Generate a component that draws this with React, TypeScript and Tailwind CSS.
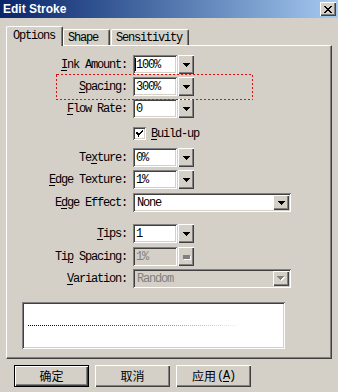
import React from "react";

const sunken =
  "shadow-[inset_1px_1px_0_#808080,inset_-1px_-1px_0_#ffffff,inset_2px_2px_0_#404040,inset_-2px_-2px_0_#d4d0c8]";
const raised =
  "shadow-[inset_1px_1px_0_#ffffff,inset_-1px_-1px_0_#404040,inset_-2px_-2px_0_#808080]";
const mono = "font-['Liberation_Mono',monospace] text-[12px] tracking-[-1.2px] leading-none";

function Arrow({ disabled }: { disabled?: boolean }) {
  if (disabled) {
    return (
      <svg width="8" height="5" viewBox="0 0 8 5" shapeRendering="crispEdges">
        <path d="M1 1h7v1h-7zM2 2h5v1h-5zM3 3h3v1h-3zM4 4h1v1h-1z" fill="#ffffff" />
        <path d="M0 0h7v1h-7zM1 1h5v1h-5zM2 2h3v1h-3zM3 3h1v1h-1z" fill="#808080" />
      </svg>
    );
  }
  return (
    <svg width="7" height="4" viewBox="0 0 7 4" shapeRendering="crispEdges">
      <path d="M0 0h7v1h-7zM1 1h5v1h-5zM2 2h3v1h-3zM3 3h1v1h-1z" fill="#000" />
    </svg>
  );
}

function U({ children }: { children: React.ReactNode }) {
  return <span className="underline underline-offset-2">{children}</span>;
}

function Label({ children }: { children: React.ReactNode }) {
  return (
    <div className={`w-[120px] text-right text-black ${mono} whitespace-pre`}>{children}</div>
  );
}

function SpinRow({
  label,
  value,
  disabled,
  caret,
  mt,
  rectBtn,
}: {
  label: React.ReactNode;
  value: string;
  disabled?: boolean;
  caret?: boolean;
  mt: string;
  rectBtn?: boolean;
}) {
  return (
    <div className={`flex items-center h-[19px] ${mt}`}>
      <Label>{label}</Label>
      <div
        className={`ml-[6px] w-[44px] h-[19px] ${sunken} ${
          disabled ? "bg-[#d4d0c8] text-[#808080]" : "bg-white text-black"
        } flex items-center pl-[3px] relative`}
      >
        {caret && <span className="absolute left-[2px] top-[3px] w-px h-[13px] bg-black" />}
        <span className={mono}>{value}</span>
      </div>
      <div className={`ml-[1px] w-[16px] h-[19px] bg-[#d4d0c8] ${raised} flex items-center justify-center`}>
        {rectBtn ? (
          <div className="w-[7px] h-[4px] bg-[#808080] shadow-[1px_1px_0_#ffffff]" />
        ) : (
          <Arrow />
        )}
      </div>
    </div>
  );
}

function ComboRow({
  label,
  value,
  disabled,
  mt,
}: {
  label: React.ReactNode;
  value: string;
  disabled?: boolean;
  mt: string;
}) {
  return (
    <div className={`flex items-center h-[19px] ${mt}`}>
      <Label>{label}</Label>
      <div
        className={`ml-[6px] w-[158px] h-[19px] ${sunken} ${
          disabled ? "bg-[#d4d0c8] text-[#808080]" : "bg-white text-black"
        } flex items-center pl-[4px] pr-[2px]`}
      >
        <span className={`${mono} flex-1`}>{value}</span>
        <div className={`w-[16px] h-[15px] bg-[#d4d0c8] ${raised} flex items-center justify-center`}>
          <Arrow disabled={disabled} />
        </div>
      </div>
    </div>
  );
}

export default function App() {
  return (
    <div className="w-[338px] h-[392px] bg-[#d4d0c8] overflow-hidden flex flex-col">
      {/* Title bar */}
      <div className="h-[18px] flex items-center bg-gradient-to-r from-[#0a246a] to-[#a6caf0] pl-[3px]">
        <span className="font-['Liberation_Sans',Arial,sans-serif] font-bold text-[12px] text-white leading-none">
          Edit Stroke
        </span>
        <div className={`ml-auto mr-[2px] w-[16px] h-[14px] bg-[#d4d0c8] ${raised} flex items-center justify-center`}>
          <svg width="8" height="7" viewBox="0 0 8 7" shapeRendering="crispEdges">
            <path d="M0 0h2v1h-2zM6 0h2v1h-2zM1 1h2v1h-2zM5 1h2v1h-2zM2 2h4v1h-4zM3 3h2v1h-2zM2 4h4v1h-4zM1 5h2v1h-2zM5 5h2v1h-2zM0 6h2v1h-2zM6 6h2v1h-2z" fill="#000" />
          </svg>
        </div>
      </div>

      {/* Tabs */}
      <div className="mt-[8px] flex items-end h-[19px] pl-[6px] relative z-10">
        <div className="h-[20px] -mb-px w-[57px] bg-[#d4d0c8] border-l border-t border-white border-r border-r-[#404040] rounded-tl-[2px] rounded-tr-[2px] shadow-[inset_-1px_0_0_#808080] flex items-center pl-[6px] pb-[2px]">
          <span className={mono}>Options</span>
        </div>
        <div className="h-[16px] w-[47px] bg-[#d4d0c8] border-l border-t border-white border-r border-r-[#404040] rounded-tl-[2px] rounded-tr-[2px] shadow-[inset_-1px_0_0_#808080] flex items-center pl-[4px]">
          <span className={mono}>Shape</span>
        </div>
        <div className="ml-[1px] h-[16px] w-[78px] bg-[#d4d0c8] border-l border-t border-white border-r border-r-[#404040] rounded-tl-[2px] rounded-tr-[2px] shadow-[inset_-1px_0_0_#808080] flex items-center pl-[4px]">
          <span className={mono}>Sensitivity</span>
        </div>
      </div>

      {/* Panel */}
      <div className="ml-[6px] w-[326px] h-[314px] border-l border-t border-white border-r border-b border-r-[#404040] border-b-[#404040] shadow-[inset_-1px_-1px_0_#808080] relative flex flex-col pt-[9px]">
        <SpinRow
          label={
            <>
              <U>I</U>nk Amount:
            </>
          }
          value="100%"
          caret
          mt="mt-0"
        />
        <SpinRow
          label={
            <>
              <U>S</U>pacing:
            </>
          }
          value="300%"
          mt="mt-[3px]"
        />
        <SpinRow
          label={
            <>
              <U>F</U>low Rate:
            </>
          }
          value="0"
          mt="mt-[3px]"
        />
        <div className="flex items-center h-[13px] mt-[9px] pl-[126px]">
          <div className={`w-[13px] h-[13px] bg-white ${sunken} flex items-center justify-center`}>
            <svg width="7" height="7" viewBox="0 0 7 7" shapeRendering="crispEdges">
              <path d="M6 0h1v1h-1zM5 1h1v1h-1zM0 2h1v1h-1zM4 2h1v1h-1zM0 3h2v1h-2zM3 3h2v1h-2zM1 4h3v1h-3zM2 5h1v1h-1z M6 1h1v1h-1zM5 2h1v1h-1zM1 2h1v1h-1zM2 3h1v1h-1zM2 6h1v1h-1z" fill="#000" />
            </svg>
          </div>
          <span className={`ml-[5px] ${mono}`}>
            <U>B</U>uild-up
          </span>
        </div>
        <SpinRow
          label={
            <>
              Te<U>x</U>ture:
            </>
          }
          value="0%"
          mt="mt-[8px]"
        />
        <SpinRow
          label={
            <>
              <U>E</U>dge Texture:
            </>
          }
          value="1%"
          mt="mt-[3px]"
        />
        <ComboRow
          label={
            <>
              E<U>d</U>ge Effect:
            </>
          }
          value="None"
          mt="mt-[4px]"
        />
        <SpinRow
          label={
            <>
              <U>T</U>ips:
            </>
          }
          value="1"
          mt="mt-[12px]"
        />
        <SpinRow
          label={
            <>
              Ti<U>p</U> Spacing:
            </>
          }
          value="1%"
          disabled
          rectBtn
          mt="mt-[4px]"
        />
        <ComboRow
          label={
            <>
              <U>V</U>ariation:
            </>
          }
          value="Random"
          disabled
          mt="mt-[3px]"
        />

        {/* Preview */}
        <div className={`ml-[15px] mt-[14px] w-[263px] h-[47px] bg-white ${sunken} flex items-center pl-[5px]`}>
          <svg width="210" height="2" viewBox="0 0 210 2" shapeRendering="crispEdges">
            <defs>
              <linearGradient id="fade" gradientUnits="userSpaceOnUse" x1="0" y1="0" x2="210" y2="0">
                <stop offset="0" stopColor="#000000" />
                <stop offset="0.35" stopColor="#333333" />
                <stop offset="0.7" stopColor="#9a9a9a" />
                <stop offset="1" stopColor="#f2f2f2" />
              </linearGradient>
              <pattern id="dots" patternUnits="userSpaceOnUse" width="2" height="1">
                <rect x="0" y="0" width="1" height="1" fill="#fff" />
              </pattern>
            </defs>
            <rect x="0" y="0" width="210" height="1" fill="url(#fade)" />
            <rect x="0" y="0" width="210" height="1" fill="url(#dots)" />
          </svg>
        </div>

        {/* Red dotted highlight */}
        <svg className="absolute left-[49px] top-[28px]" width="197" height="26" viewBox="0 0 197 26" shapeRendering="crispEdges">
          <rect x="0.5" y="0.5" width="196" height="25" fill="none" stroke="#e01010" strokeWidth="1" strokeDasharray="2 2" />
        </svg>
      </div>

      {/* Buttons */}
      <div className="mt-[6px] ml-[14px] flex gap-[6px] font-['Noto_Sans_CJK_SC',sans-serif] text-[12px] leading-none">
        <div className="w-[75px] h-[22px] border border-black">
          <div className={`w-full h-full ${raised} flex items-center justify-center`}>确定</div>
        </div>
        <div className={`w-[75px] h-[22px] ${raised} flex items-center justify-center`}>取消</div>
        <div className={`w-[75px] h-[22px] ${raised} flex items-center justify-center`}>
          应用<span className={`${mono} ml-[1px]`}>
            (<U>A</U>)
          </span>
        </div>
      </div>
    </div>
  );
}
